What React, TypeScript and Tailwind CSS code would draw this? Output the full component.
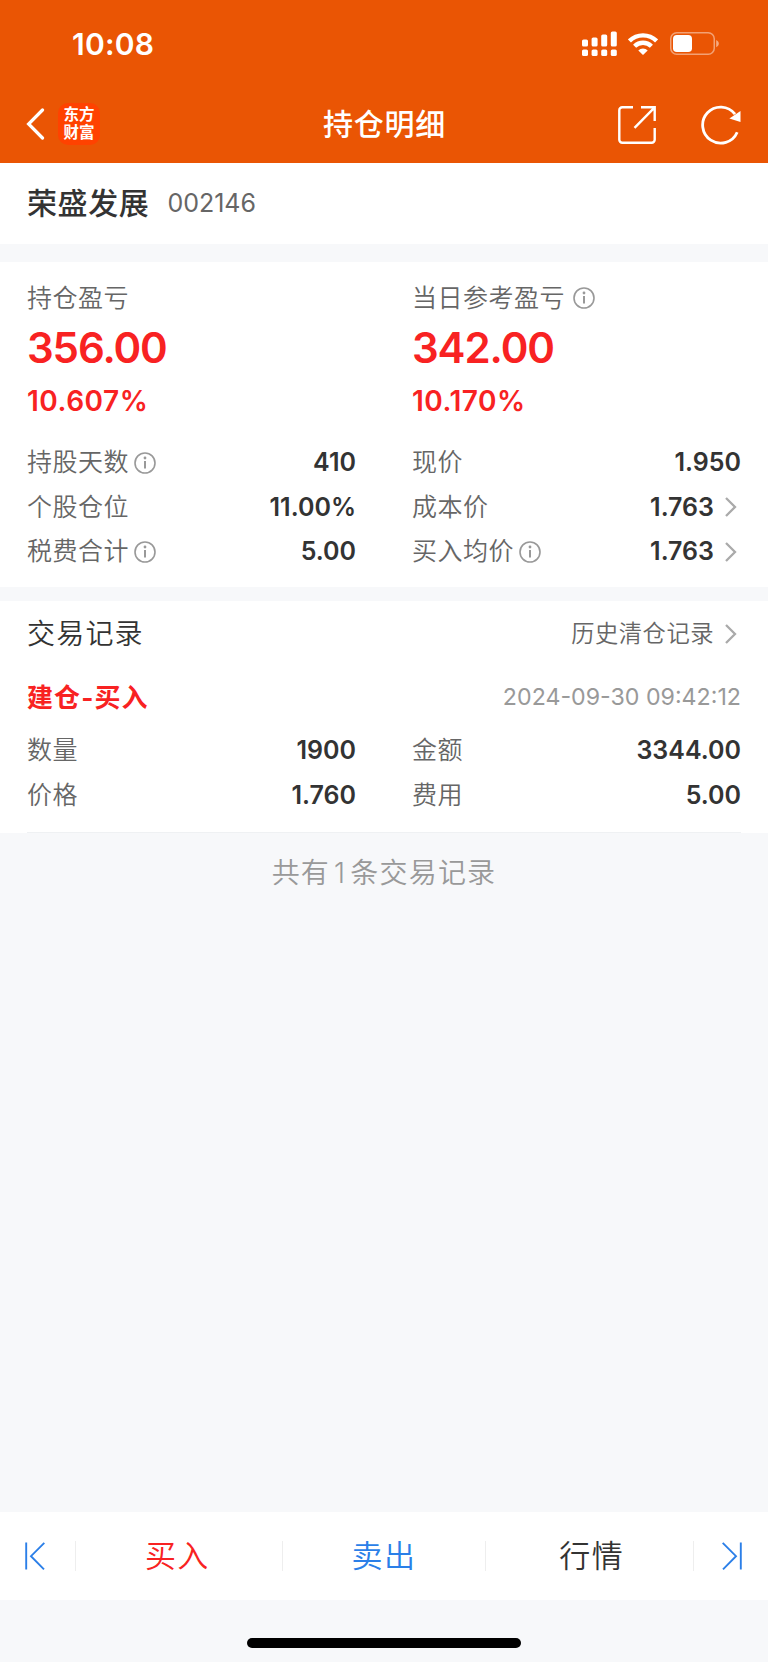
// Position detail — holding P/L summary and trade records
import type { ReactNode } from "react"
import clsx from "clsx"

interface FieldProps {
  label: string
  value: string
  info?: boolean
  link?: boolean
}

const summary: FieldProps[] = [
  { label: "持股天数", value: "410", info: true },
  { label: "现价", value: "1.950" },
  { label: "个股仓位", value: "11.00%" },
  { label: "成本价", value: "1.763", link: true },
  { label: "税费合计", value: "5.00", info: true },
  { label: "买入均价", value: "1.763", info: true, link: true },
]

const record: FieldProps[] = [
  { label: "数量", value: "1900" },
  { label: "金额", value: "3344.00" },
  { label: "价格", value: "1.760" },
  { label: "费用", value: "5.00" },
]

function InfoIcon({ className }: { className?: string }) {
  return (
    <svg viewBox="0 0 22 22" className={clsx("w-[22px] h-[22px] shrink-0", className)} fill="none" stroke="#999">
      <circle cx="11" cy="11" r="10" strokeWidth="1.6" />
      <path d="M11 9V16.6" strokeWidth="2" />
      <circle cx="11" cy="6" r="1.4" fill="#999" stroke="none" />
    </svg>
  )
}

function ChevronRight() {
  return (
    <svg viewBox="0 0 12 20" className="w-3 h-5 shrink-0 ml-[11px] mr-1" fill="none" stroke="#aaa" strokeWidth="2.3">
      <path d="M1 1L10 10L1 19" />
    </svg>
  )
}

function StatusBar() {
  return (
    <div className="h-[87px] flex items-center justify-between pl-[72px] pr-[49px]">
      <span className="text-[30px] leading-none font-semibold tracking-[0.2px]">10:08</span>
      <div className="flex items-center">
        <svg viewBox="0 0 36 26" className="w-9 h-[26px]" fill="#fff">
          <rect x="0" y="8.5" width="6" height="7" rx="1.6" />
          <rect x="9.6" y="6.5" width="6" height="9" rx="1.6" />
          <rect x="19.2" y="3.5" width="6" height="12" rx="1.6" />
          <rect x="28.8" y="0.5" width="6" height="15" rx="1.6" />
          <rect x="0" y="18.5" width="6" height="6.5" rx="1.6" />
          <rect x="9.6" y="18.5" width="6" height="6.5" rx="1.6" />
          <rect x="19.2" y="18.5" width="6" height="6.5" rx="1.6" />
          <rect x="28.8" y="18.5" width="6" height="6.5" rx="1.6" />
        </svg>
        <svg viewBox="0 0 30 22" className="w-[30px] h-[22px] ml-2.5" fill="none" stroke="#fff" strokeWidth="4.4">
          <path d="M1.4 7.9A19.4 19.4 0 0 1 28.6 7.9" />
          <path d="M6.6 13.2A12 12 0 0 1 23.4 13.2" />
          <path d="M15 22L10.3 17.4A6.7 6.7 0 0 1 19.7 17.4Z" fill="#fff" stroke="none" />
        </svg>
        <svg viewBox="0 0 49 24" className="w-[49px] h-6 ml-3" fill="none">
          <rect x="0.75" y="0.75" width="43.5" height="21.5" rx="6" stroke="#fff" strokeOpacity="0.45" strokeWidth="1.5" />
          <rect x="3" y="3" width="19" height="17" rx="3.8" fill="#fff" />
          <path d="M46.2 8V15.2C47.8 14.5 48.8 13.2 48.8 11.6S47.8 8.7 46.2 8Z" fill="#fff" fillOpacity="0.5" />
        </svg>
      </div>
    </div>
  )
}

function NavBar() {
  return (
    <div className="h-[76px] pb-0.5 grid grid-cols-[1fr_auto_1fr] items-center pl-[26px] pr-[27px]">
      <div className="flex items-center">
        <svg viewBox="0 0 19 32" className="w-[19px] h-8" fill="none" stroke="#fff" strokeWidth="3.2" strokeLinecap="round">
          <path d="M16.5 2L2.6 16L16.5 30" />
        </svg>
        <div className="w-[42px] h-[42px] ml-[13px] rounded-[10px] bg-[#ff4200] flex flex-col items-center justify-center text-[15.5px] leading-[18px] font-bold">
          <span>东方</span>
          <span>财富</span>
        </div>
      </div>
      <h1 className="pl-0.5 text-[30px] leading-none font-medium tracking-[0.8px]">持仓明细</h1>
      <div className="flex items-center justify-end mt-0.5">
        <svg viewBox="0 0 38 38" className="w-[38px] h-[38px]" fill="none" stroke="#fff" strokeWidth="2.4">
          <path d="M15 1.3H4.3A3 3 0 0 0 1.3 4.3V33.7A3 3 0 0 0 4.3 36.7H33.7A3 3 0 0 0 36.7 33.7V22" />
          <path d="M23 1.3H36.7V15M36.2 1.8L16.5 21.8" />
        </svg>
        <svg viewBox="0 0 40 40" className="w-10 h-10 ml-[45px]" fill="none">
          <path d="M36.2 27.2A18 18 0 1 1 34 9.2" stroke="#fff" strokeWidth="2.8" />
          <path d="M39.5 6V17L28.4 13.6Z" fill="#fff" />
        </svg>
      </div>
    </div>
  )
}

function Field({ label, value, info, link }: FieldProps) {
  return (
    <div className="h-[44.8px] flex items-center leading-none">
      <span className="text-[25px] tracking-[0.5px] text-[#666] font-[350]">{label}</span>
      {info && <InfoIcon className="ml-[5px] mt-px" />}
      <span className="ml-auto text-[25px] font-semibold text-[#333]">{value}</span>
      {link && <ChevronRight />}
    </div>
  )
}

function Profit({ label, amount, percent, info }: { label: string; amount: string; percent: string; info?: boolean }) {
  return (
    <div className="leading-none">
      <div className="h-[46px] flex items-center text-[25px] tracking-[0.5px] text-[#666] font-[350]">
        {label}
        {info && <InfoIcon className="ml-2" />}
      </div>
      <div className="h-[54px] flex items-center text-[42px] tracking-[-1.1px] font-semibold text-[#f82222]">{amount}</div>
      <div className="h-[51px] flex items-center text-[28px] tracking-[0.5px] font-semibold text-[#f82222]">{percent}</div>
    </div>
  )
}

function Action({ children, className }: { children: ReactNode; className: string }) {
  return (
    <button className={clsx("flex-1 h-[30px] pb-0.5 flex items-center justify-center text-[31px] leading-none tracking-[1.4px] font-[350] border-r border-[#eee]", className)}>
      {children}
    </button>
  )
}

export default function App() {
  return (
    <div className="w-[768px] h-[1662px] flex flex-col bg-[#f7f8fa] font-['Inter','Noto_Sans_CJK_SC',sans-serif]">
      <header className="bg-[#ea5504] text-white">
        <StatusBar />
        <NavBar />
      </header>

      <section className="h-[81px] bg-white flex items-center px-[27px] leading-none">
        <span className="pb-0.5 text-[30px] tracking-[0.6px] font-medium text-[#333]">荣盛发展</span>
        <span className="ml-[18px] text-[25px] text-[#666]">002146</span>
      </section>

      <section className="mt-[18px] h-[325px] bg-white px-[27px] pt-[13px]">
        <div className="grid grid-cols-2 gap-x-14">
          <Profit label="持仓盈亏" amount="356.00" percent="10.607%" />
          <Profit label="当日参考盈亏" amount="342.00" percent="10.170%" info />
        </div>
        <div className="grid grid-cols-2 gap-x-14 mt-3.5">
          {summary.map((f) => (
            <Field key={f.label} {...f} />
          ))}
        </div>
      </section>

      <section className="mt-3.5 h-[232px] bg-white px-[27px] leading-none">
        <div className="h-[66px] flex items-center">
          <h2 className="text-[28px] tracking-[1.2px] text-[#333] font-[350]">交易记录</h2>
          <span className="ml-auto text-[23.3px] tracking-[0.5px] text-[#666] font-[350]">历史清仓记录</span>
          <ChevronRight />
        </div>
        <div className="h-[61px] flex items-center justify-between">
          <span className="text-[26px] tracking-[1.1px] font-bold text-[#f82222]">建仓-买入</span>
          <span className="text-[23.2px] text-[#999]">2024-09-30 09:42:12</span>
        </div>
        <div className="grid grid-cols-2 gap-x-14">
          {record.map((f) => (
            <Field key={f.label} {...f} />
          ))}
        </div>
        <div className="mt-3.5 h-px bg-[#eff1f3]" />
      </section>

      <p className="h-20 flex items-center justify-center text-[28px] leading-none tracking-[1.2px] text-[#999] font-[350]">
        共有<span className="mx-1">1</span>条交易记录
      </p>

      <footer className="mt-auto">
        <div className="h-[88px] bg-white flex items-center">
          <div className="w-[76px] h-[30px] flex items-center pl-[25px] border-r border-[#eee]">
            <svg viewBox="0 0 20 28" className="w-5 h-7" fill="none" stroke="#2b7fe8" strokeWidth="1.9">
              <path d="M1.2 0.5V27.5M19.3 0.8L6 14.2L19 27.3" />
            </svg>
          </div>
          <Action className="text-[#f82222] pr-[3px]">买入</Action>
          <Action className="text-[#2b7fe8]">卖出</Action>
          <Action className="text-[#333] pl-1">行情</Action>
          <div className="w-[74px] flex items-center pl-7">
            <svg viewBox="0 0 20 28" className="w-5 h-7" fill="none" stroke="#2b7fe8" strokeWidth="1.9">
              <path d="M18.8 0.5V27.5M0.7 0.8L14 14.2L1 27.3" />
            </svg>
          </div>
        </div>
        <div className="h-[62px] pt-[38px]">
          <div className="w-[274px] h-[9.5px] mx-auto rounded-full bg-black" />
        </div>
      </footer>
    </div>
  )
}
